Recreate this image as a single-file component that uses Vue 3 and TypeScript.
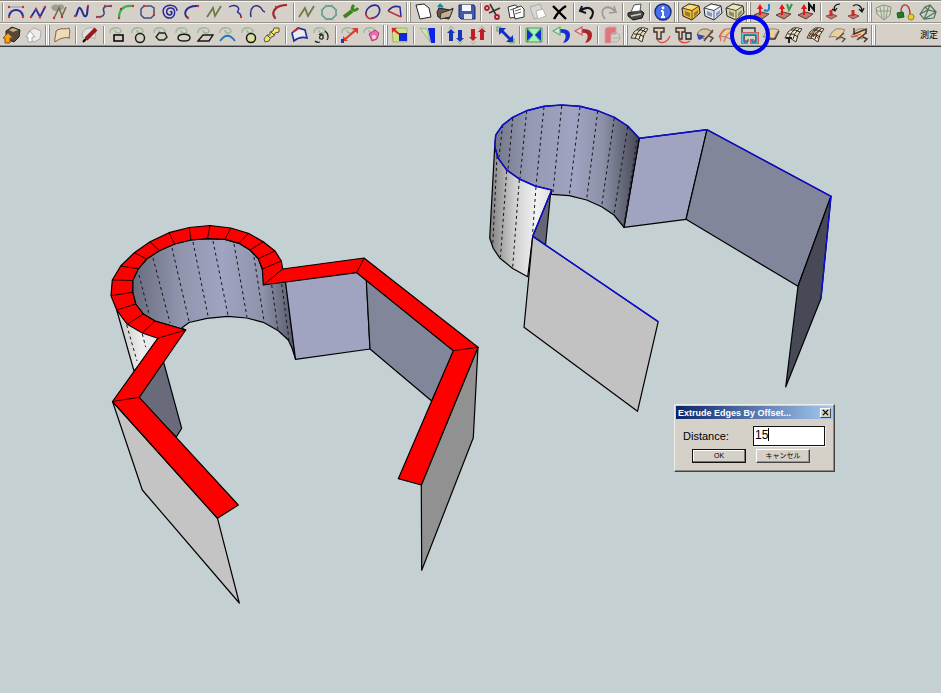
<script setup lang="ts">
import { ref } from 'vue'

type Part = { d: string; s?: string; f?: string; w?: number }
type Item = { kind: 'tool'; name: string; parts: Part[]; marked?: boolean } | { kind: 'sep' } | { kind: 'grip' }

const line = (d: string, s = '#000', w = 1): Part => ({ d, s, w })
const fill = (d: string, f: string, s = 'none', w = 1): Part => ({ d, f, s, w })
const dot = (x: number, y: number, r: number) => `M${x - r} ${y}a${r} ${r} 0 1 0 ${r * 2} 0a${r} ${r} 0 1 0 ${-r * 2} 0z`
const ends = (...p: number[][]): Part => fill(p.map(([x, y]) => dot(x, y, 1.2)).join(''), '#c8323c')
const tool = (name: string, ...parts: Part[]): Item => ({ kind: 'tool', name, parts })
const marked = (name: string, ...parts: Part[]): Item => ({ kind: 'tool', name, parts, marked: true })
const sep: Item = { kind: 'sep' }
const grip: Item = { kind: 'grip' }

const navy = '#2a2a96'
const crimson = '#b01c2c'
const olive = '#6c7a48'
const pale = '#a4b8a0'

const loop = line('M3 8C2 2 13 1 14 6C14 9 8 9 8 5', pale, 1.6)
const mesh = [
  fill('M2 13Q4 6 10 3Q15 2 19 4Q14 9 13 17Q8 12 2 13z', '#efe6c8', '#333'),
  line('M5 9Q11 8 15 12M8 5Q12 4 17 7M6 13Q8 7 13 3M10 14Q11 8 16 4', '#222'),
]
const leaf = fill('M2 12Q5 6 9 4Q14 3 18 5Q14 9 13 14Q8 10 2 12z', '#ecd09a', '#8a8378')
const pusher = (dark: string): Part[] => [
  fill('M2 13L9 10L17 12L10 17z', '#c4796c', '#55403c'),
  fill('M8 2L11 7H9V13H7V7H5z', dark),
]
const box = (top: string, side: string, edge: string, panel: string): Part[] => [
  fill('M2 6L9 2L19 4L20 11L12 18L3 14z', side, '#222'),
  fill('M2 6L9 2L19 4L12 8.500z', top, '#444'),
  fill('M5 9L10 11V15L5 13zM14 11L18 8V11L14 15z', panel),
  line('M12 8.500V18', edge),
]

const topRow: Item[] = [
  sep,
  tool('Classic Bezier', line('M4 14C6 6 16 6 18 14', navy, 2), line('M3 5H19', '#8d97a8'), ends([4, 15], [18, 15], [4, 5], [18, 5])),
  tool('Polyline', line('M4 15L9 7L13 15L18 5', navy, 1.8), ends([4, 15], [9, 7], [13, 15], [18, 5])),
  tool('Polyline divider', fill('M2 5Q5 1 9 3Q13 1 15 4Q15 9 10 8Q4 11 2 5z', '#a09c94'), line('M5 16L10 6L13 14L17 5', '#756c46', 1.6), ends([5, 16], [13, 15])),
  tool('Cubic Bezier', line('M4 14C6 15 7 4 9 6C12 8 12 16 15 14C17 12 16 8 17 4', navy, 2), ends([4, 14], [17, 4])),
  tool('Catmull spline', line('M4 15C10 15 12 13 11 10C9 5 12 4 18 4', '#33447c', 1.5), ends([4, 15], [7, 15], [18, 4], [12, 4])),
  tool('F-Spline', line('M4 16C4 8 8 3 18 4', '#2fb44e', 2.2), ends([4, 16], [6, 7], [18, 4])),
  tool('Rounded polygon', line('M7 4H14L17 6V13L14 16H7L4 13V7z', '#484887', 1.5), ends([7, 4], [17, 13])),
  tool('Spiral', line('M11 10C13 8 14 12 11 13C7 13 6 7 11 6C17 5 17 14 12 16C5 17 2 9 6 5C10 2 18 3 18 9', navy, 1.5)),
  tool('Arc', line('M7 16C1 12 5 3 17 4', navy, 2), ends([7, 16], [17, 4])),
  tool('Simple polyline', line('M4 15L10 6L12 14L18 4', olive, 1.8)),
  tool('Curve right', line('M4 5C11 1 15 6 13 9C11 11 15 10 16 14', navy, 1.4), ends([16, 15])),
  tool('Curve left', line('M4 15C2 5 8 2 13 5C16 7 14 9 18 10', '#34347e', 1.5)),
  tool('Red arc', line('M6 16C1 9 8 3 18 3', '#a32436', 2.2), ends([6, 16], [7, 5])),
  sep,
  tool('Edit polyline', line('M3 15L9 6L12 14L18 4', olive, 1.8)),
  tool('Polygon', line('M8 4H14L18 8V13L14 17H8L4 13V8z', '#4f9388', 1.4), fill([[8, 4], [14, 4], [18, 8], [4, 8], [4, 13], [18, 13], [8, 17], [14, 17]].map(([x, y]) => dot(x, y, 1.2)).join(''), '#69aaa0')),
  tool('Properties', line('M4 15L12 9', '#3e851d', 4), line('M18 6Q16 9 13 8Q11 6 14 3', '#3e851d', 3)),
  tool('Closed curve', line('M4 13C3 7 10 1 16 4C20 9 16 16 9 16', navy, 1.6), line('M4 11C4 17 9 18 14 15', '#bd3440', 1.8)),
  tool('Sector', line('M4 9C8 4 13 4 16 5L17 15', navy, 1.5), line('M4 9L17 15', '#bd3440', 1.8)),
  grip,
  tool('New', fill('M4 3L12 2L17 6L19 15L8 17z', '#fff', '#222')),
  tool('Open', fill('M3 10L5 6L16 8L19 6L15 17L4 15z', '#675546', '#222'), fill('M7 11L19 7L16 15L6 17z', '#c8ac8e', '#333'), line('M4 5L7 2M5 3L9 5', '#118299', 2)),
  tool('Save', fill('M3 3H18L19 5V17H5L3 15z', '#4459a8', '#182664'), fill('M6 3H15V9H6z', '#f7f7ff'), fill('M8 12H16V17H8z', '#dce1ea')),
  sep,
  tool('Cut', line('M7 2L13 13M17 6L6 11', '#3b3535', 1.6), line(dot(14, 15, 2), crimson, 1.8), line(dot(4, 6, 2), crimson, 1.8)),
  tool('Copy', fill('M3 5L10 3L13 5V15L5 16z', '#fff', '#333'), fill('M8 7L16 4L19 7V15L10 17z', '#fff', '#333'), line('M10 9L16 7M10 12L16 10M5 8L8 7', '#666')),
  tool('Paste', fill('M3 5L13 2L17 13L7 17z', '#d8d8d2', '#aaa'), fill('M9 9L16 7L19 14L11 17z', '#fff', '#b0b0b0')),
  tool('Delete', line('M4 4L17 17M17 4Q10 8 5 17', '#000', 2.4)),
  sep,
  tool('Undo', line('M14 17C21 9 14 2 4 9', '#151520', 2.2), line('M6 4L4 9L10 11', '#151520', 2)),
  tool('Redo', line('M7 17C0 8 8 1 17 9', '#989898', 1.8), line('M16 4L18 10L11 11', '#989898', 1.6)),
  sep,
  tool('Print', fill('M3 11L15 8L19 11L17 16L8 18L3 14z', '#494949', '#111'), fill('M6 10L9 3L16 2L15 9z', '#fff', '#555'), line('M6 14L16 12', '#c7d0bb', 1.6)),
  sep,
  tool('Model info', fill(dot(11, 10, 8), '#4a70e6', '#172a88', 1.4), line('M11 9V15M9 9H11M9 15H13', '#fff', 2), fill(dot(11, 6, 1.4), '#fff')),
  grip,
  tool('Solid box', ...box('#ffe06d', '#f2b92c', '#805807', '#8a7a4c')),
  tool('Shaded box', ...box('#fff', '#dfe7f4', '#55607e', '#8c98b4')),
  tool('Textured box', ...box('#ece7bc', '#d9d4a4', '#66643f', '#8e8c68')),
  grip,
  tool('Joint push pull', ...pusher('#e21717'), line('M17 2V7Q16 10 12 8', '#1889c7', 2)),
  tool('Vector push pull', ...pusher('#e21717'), line('M13 2L15 8L18 2', '#2f9b45', 2)),
  tool('Normal push pull', ...pusher('#e21717'), line('M13 9V2L18 8V2', '#111', 2)),
  sep,
  tool('Undo push pull', fill('M3 14L9 12L14 14L8 17z', '#c4796c', '#7c5148'), line('M8 14V8', '#cd2b1d', 3), line('M17 2C12 2 10 5 12 9M9 7L12 9L14 6', '#111', 1.2)),
  tool('Redo push pull', fill('M3 14L9 12L14 14L8 17z', '#c4796c', '#7c5148'), line('M8 14V8', '#cd2b1d', 3), line('M8 4C12 1 17 4 17 9M14 7L17 10L19 6', '#111', 1.2)),
  grip,
  tool('Subdivide', fill('M3 6L10 3L18 5L17 13L11 18L4 12z', '#dadcc8', '#83907d'), line('M7 5L9 16M11 4V17M15 5L13 16M4 9H17', '#8d9a8a')),
  tool('Follow path', line('M6 11C5 0 15 0 15 12', '#b23540', 1.4), fill('M2 11L8 10L9 15L3 16z', '#188322', '#1a5824'), fill(dot(16, 15, 3), '#e3cf25', '#93881c')),
  tool('Crystal', line('M3 12L8 5L13 3L19 10L17 16L7 17zM8 5L11 8L13 3M3 12L11 8L19 10M11 8L7 17M7 17L19 10', '#4d755d', 1.2)),
]

const bottomRow: Item[] = [
  tool('Import', fill('M5 6L11 2L19 5L18 12L13 17L5 14z', '#54483c', '#222'), fill('M8 5L12 3L17 5L12 7z', '#c3ae85'), fill('M7 8L12 13H9V18H4V13H2z', '#f5a21b', '#86510b')),
  tool('Export', fill('M5 7L11 3L18 6L17 14L11 17L6 14z', '#ececec', '#aaa'), fill('M7 6L12 12H9V17H5V12H3z', '#fff', '#a7a7a7')),
  grip,
  tool('Surface', fill('M5 6C10 2 15 5 18 3C20 8 17 12 19 13C14 12 9 13 4 17C3 14 5 11 5 6z', '#f0dbb5', '#755f42')),
  sep,
  tool('Draw on surface', fill('M3 10C4 5 8 2 14 3C18 7 16 11 16 14C12 11 8 12 5 15z', '#e2e2e2', '#a1ada3'), line('M7 14L17 4', '#981820', 4), line('M4 17L7 14', '#000', 2)),
  sep,
  tool('Surface rectangle', loop, line('M7 10H16V16H7z', '#000', 1.5)),
  tool('Surface circle', loop, line(dot(11, 13, 4.5), '#162019', 1.5)),
  tool('Surface polygon', loop, line('M5 12L8 8H14L16 12L13 15H8z', '#202b20', 1.4)),
  tool('Surface ellipse', loop, line('M5 13C5 8 17 8 17 13C17 17 5 17 5 13z', '#141914', 1.4)),
  tool('Surface parallelogram', loop, line('M3 16L8 10H18L14 16z', '#191919', 1.4)),
  tool('Surface arc', loop, line('M3 16C8 9 13 9 18 16', '#1a78bd', 1.8)),
  tool('Surface disc', loop, fill(dot(12, 13, 4.5), '#d8e29c', '#151515', 1.5)),
  tool('Surface offset', fill('M3 14L6 10L9 10L9 7L12 6L13 3L18 3L18 7L14 8L13 11L10 12L8 16L4 17z', '#f5e95b', '#555'), line('M6 10L9 13M10 7L13 10', '#444')),
  sep,
  tool('Surface freehand', fill('M3 8L9 3L16 5L18 13Q11 11 5 16z', '#ececee', '#1c2b9f', 1.6), line('M4 7L10 3', '#c5252e', 2)),
  tool('Text on surface', loop, line('M8 10C12 6 14 15 10 14C7 14 9 9 12 10V14M14 6Q19 10 16 15M4 16Q6 18 9 17', '#222', 1.2)),
  sep,
  tool('Scale edge', loop, line('M5 15L17 5', '#e3352c', 2), fill('M13 3H19V9zM4 11V16H9z', '#e3352c'), fill('M2 14H5V18H2z', '#2732bc')),
  tool('Eraser', loop, fill('M8 9L14 5L18 8L16 14L11 16z', '#ed6eac', '#ad3d7e'), fill(dot(13, 12, 2), '#ffd5e8')),
  grip,
  tool('Place component', fill('M3 3H18V17H4z', '#c9e48c', '#a7af63'), fill('M10 8H18V16H10z', '#1028d6'), line('M4 4L10 9', '#d8262b', 2), fill('M3 3H8L3 8z', '#d8262b')),
  sep,
  tool('Mirror', fill('M11 3H18V18H14z', '#0c22e8'), fill('M3 3L10 4L13 17z', '#cfe6b4', '#9db496')),
  sep,
  tool('Lift edges', fill('M6 4L10 8H8V16H4V8H2z', '#1634b8'), fill('M15 17L11 13H13V5H17V13H19z', '#1634b8'), line('M4 4L6 1L9 4M12 16L15 19L18 16', '#8eb38e')),
  tool('Drop edges', fill('M6 16L2 12H4V4H8V12H10z', '#c01e24'), fill('M15 3L19 7H17V15H13V7H11z', '#c01e24'), line('M4 16L6 19L9 16M12 4L15 1L18 4', '#a9b39e')),
  sep,
  tool('Diagonal link', line('M2 2H6V6H2zM15 14H19V18H15z', '#65a56d', 1.2), line('M7 6L15 14', '#1230c8', 3), fill('M4 3H11L4 10zM18 17H11L18 10z', '#1230c8')),
  sep,
  tool('Flip', fill('M3 3H19V17H3z', '#a4f0c0', '#61954f'), fill('M4 4L10 10L4 16zM18 4L12 10L18 16z', '#1230d8'), line('M4 3L10 10L4 17M18 3L12 10L18 17', '#2c9c4c')),
  sep,
  tool('Rotate blue', fill('M8 4Q20 3 19 11Q18 17 12 18Q16 12 14 9Q12 7 8 8z', '#1230d8'), fill('M9 2L2 6L9 10z', '#d4e8d4', '#5eb27a', 1.2)),
  tool('Rotate red', fill('M8 4Q20 3 19 11Q18 17 12 18Q16 12 14 9Q12 7 8 8z', '#b02028'), fill('M9 2L2 6L9 10z', '#e8d4d4', '#d05860', 1.2)),
  sep,
  tool('Bend', fill('M4 18V5Q4 2 8 2H15V9H10V18z', '#e4747c', '#c9a7a9'), line('M10 8Q19 6 19 13Q18 18 11 17M12 13H19', '#b6aaa9')),
  grip,
  tool('Edges to faces', ...mesh),
  tool('Extrude by rails', fill('M3 3H13V7H10V14H6V7H3z', '#e7ceb9', '#3b302b', 1.4), line('M6 14C9 20 16 18 19 11', '#e04a49', 1.3)),
  tool('Extrude by face', fill('M3 3H12V7H9V14H6V7H3z', '#e7ceb9', '#3b302b', 1.4), line('M6 15C9 19 14 18 17 16', '#e04a49', 1.3), line('M13 8H18V14H13z', '#222', 1.3)),
  tool('Extrude by lathe', fill('M2 10Q4 3 12 4L18 7L9 14z', '#dac79f', '#75685b'), fill('M2 9L10 11L5 15L3 14z', '#3449be'), line('M9 16L18 5M14 11L18 13L15 17', '#55483f', 1.4)),
  tool('Extrude by vector', leaf, line('M4 16L3 12Q5 6 9 4M7 17Q8 9 17 5M2 12Q5 6 8 4', '#de6b54', 1.3)),
  marked('Extrude edges by offset', line('M6 8H3V3H16V8H13', '#333', 1.4), line('M9 17H4V9H18V17H13V14', '#e94a3d', 4), line('M9 17H4V9H18V17H13V14', '#52c4dc', 2.4), line('M9 14V17H5V10H17V17H13V14', '#17596c', 1)),
  tool('Extrude by edges', leaf, line('M8 14L14 14L18 6', '#383838', 1.3)),
  tool('Mesh by object', ...mesh, fill('M3 12H9V14H7V18H5V14H3z', '#222')),
  tool('Mesh', ...mesh, line('M4 11Q8 5 13 3M8 12Q11 6 16 4M4 12Q10 8 14 14', '#6a3028')),
  tool('Trim surface', leaf, line('M9 15L17 8M14 12L18 14L15 17', '#55483f', 1.3)),
  tool('Split surface', leaf, line('M5 3V9L17 4V9M8 15L17 8M14 12L18 14L15 17', '#44332e', 1.5), line('M3 12L12 9', '#d94343', 1.3)),
  grip,
]
const rows = [
  { id: 'top', label: 'Drawing', items: topRow },
  { id: 'bottom', label: 'Surface and extrusion', items: bottomRow },
]

type Pt = [number, number]
const pts = (list: Pt[]) => list.map((p) => p.join(',')).join(' ')

/* Left model: flat band produced by the offset */
const ringOuter: Pt[] = [[282.7, 269], [281.3, 261], [275, 251], [263.3, 241.7], [248.3, 233.3], [230.7, 228], [210, 225.5], [189.3, 227.5], [169, 232.7], [150, 241.7], [134.3, 252.7], [120.7, 266], [112.3, 280], [111, 295.7], [116.7, 310], [127.3, 324.3], [142.3, 333], [157.7, 338.3]]
const ringInner: Pt[] = [[263.3, 285], [262.3, 269], [258.3, 258.6], [250, 250], [239, 243.3], [225, 239.3], [207.5, 238.6], [190.9, 240], [174.7, 244], [159.3, 250.7], [146.7, 259], [138.3, 268.8], [132.7, 280.5], [132.7, 292.3], [135.7, 304], [143.3, 314], [155, 321], [185.7, 330]]
const band: Pt[] = [
  [421.3, 485], [478, 347.3], [364, 258], ...ringOuter, [112.5, 401.5], [217.5, 518.3], [238.3, 505], [139.3, 397.3],
  ...[...ringInner].reverse(), [356.7, 272.7], [453.3, 350.7], [398.3, 478.7],
]
const joints: Pt[][] = [
  ...ringOuter.map((p, i): Pt[] => [p, ringInner[i]]),
  [[364, 258], [356.7, 272.7]], [[478, 347.3], [453.3, 350.7]], [[112.5, 401.5], [139.3, 397.3]],
]
const leftBottom: Pt[] = [[181.7, 328], [189, 322.5], [207, 318.3], [227.7, 316.4], [246.7, 318], [263.3, 322.3], [278.3, 330.7], [288.3, 340], [292, 348], [295.5, 359]]
const leftInside: Pt[] = [...ringInner.slice(1), ...leftBottom, [285.3, 278]]
const leftDashes: Pt[][] = [
  [[139, 275], [149, 314]], [[153, 258], [170, 323]], [[172, 248], [189, 321]], [[193, 242], [208, 316]], [[213, 241], [228, 315]],
  [[234, 244], [247, 317]], [[254, 257], [264, 321]], [[271.7, 285], [278, 330]], [[281.7, 284], [289, 340]],
  [[126.7, 325], [137, 361]], [[142.3, 334], [145.7, 347]],
]

/* Right model: the edges before the offset */
const rimFront: Pt[] = [[494.7, 146.7], [498, 158], [506.7, 170], [519.3, 179], [535, 186], [551.7, 190]]
const rimBack: Pt[] = [[494.7, 146.7], [495.7, 135], [502.7, 125], [512.7, 117.3], [526.7, 110.7], [544, 106.3], [561.7, 105], [580, 106.3], [597.7, 110.7], [614.3, 117.3], [627.7, 126], [639.3, 138.3]]
const rightBottom: Pt[] = [[624, 227.3], [614, 215], [601.7, 206.7], [586.7, 200], [569.3, 195.7], [551.3, 194.3]]
const outerBottom: Pt[] = [[527.7, 276.7], [512.7, 268.5], [500, 258.3], [493.3, 248.5], [489.7, 238]]
const rightInside: Pt[] = [...rimBack, ...rightBottom, ...[...rimFront].reverse()]
const rightOutside: Pt[] = [...rimFront, [532.7, 236.3], ...outerBottom]
const rightDashes: Pt[][] = [
  [[502.7, 125], [499, 157]], [[512.7, 118], [508, 170]], [[526.7, 111], [520, 178]], [[544, 107], [536, 186]], [[561.7, 106], [553, 192]],
  [[580, 107], [569.3, 195]], [[597.7, 111], [586.7, 199]], [[614.3, 118], [601.7, 206]], [[627.7, 127], [614, 214]], [[637, 140], [624, 225]],
  [[497, 156], [492.7, 246]], [[506.7, 171], [500.5, 257]], [[519.3, 180], [512.7, 267]], [[536, 187], [532.7, 232]],
]

const distance = ref('15')
const open = ref(true)
</script>

<template>
  <main class="app">
    <header class="toolbars">
      <div v-for="row in rows" :key="row.id" class="bar" :class="row.id" role="toolbar" :aria-label="row.label">
        <template v-for="(item, i) in row.items" :key="i">
          <span v-if="item.kind === 'sep'" class="sep"></span>
          <span v-else-if="item.kind === 'grip'" class="grip"></span>
          <button v-else type="button" class="tool" :class="{ marked: item.marked }" :aria-label="item.name">
            <svg viewBox="0 0 22 20" aria-hidden="true">
              <path v-for="(p, k) in item.parts" :key="k" :d="p.d" :fill="p.f ?? 'none'" :stroke="p.s" :stroke-width="p.w" />
            </svg>
          </button>
        </template>
        <span v-if="row.id === 'bottom'" class="measure">測定</span>
      </div>
    </header>

    <section class="viewport">
      <svg class="scene" viewBox="0 47 941 646" preserveAspectRatio="xMinYMin meet" role="img" aria-label="Model view">
        <defs>
          <linearGradient id="in-left"><stop offset="0" stop-color="#696c7d" /><stop offset=".3" stop-color="#9195ae" /><stop offset=".55" stop-color="#a0a4c1" /><stop offset=".8" stop-color="#8e92ab" /><stop offset="1" stop-color="#555766" /></linearGradient>
          <linearGradient id="in-right"><stop offset="0" stop-color="#747789" /><stop offset=".25" stop-color="#9599b3" /><stop offset=".55" stop-color="#a0a4c1" /><stop offset=".75" stop-color="#8c90a8" /><stop offset="1" stop-color="#454753" /></linearGradient>
          <linearGradient id="out"><stop offset="0" stop-color="#808080" /><stop offset=".4" stop-color="#cfcfcf" /><stop offset=".75" stop-color="#f2f2f2" /><stop offset="1" stop-color="#ddd" /></linearGradient>
          <linearGradient id="out-left"><stop offset="0" stop-color="#c4c4c4" /><stop offset=".5" stop-color="#ececec" /><stop offset="1" stop-color="#e4e4e4" /></linearGradient>
        </defs>

        <g class="faces">
          <polygon points="116.7,310 134,371 165,340 142,325" fill="url(#out-left)" />
          <polygon :points="pts(leftInside)" fill="url(#in-left)" />
          <polygon points="285,278 366,270 370,349 295.5,359.3" fill="#a0a4c0" />
          <polygon points="366,275 455,350 431.7,401 370,349" fill="#82869a" />
          <polygon points="478,347.3 473.3,437.7 421.7,570.3 421.3,485" fill="#919191" />
          <polygon points="163,360 181.7,428.3 176.3,437 135,397" fill="#696b7b" />
          <polygon points="112.5,401.5 142.3,490 239.3,603 217.5,518.3" fill="#c4c4c4" />
          <polyline v-for="(d, i) in leftDashes" :key="i" :points="pts(d)" class="dash" />
          <polygon :points="pts(band)" fill="#f00" />
          <polyline v-for="(j, i) in joints" :key="'j' + i" :points="pts(j)" class="thin" />
        </g>

        <g class="faces">
          <polygon points="639.3,138.3 707,129.7 686,219.3 624,227.3" fill="#a0a4c0" />
          <polygon points="707,129.7 831,196.3 798,286.3 686,219.3" fill="#82869a" />
          <polygon points="831,196.3 821,298.5 785.7,387 798,286.3" fill="#474956" />
          <polygon :points="pts(rightInside)" fill="url(#in-right)" />
          <polygon points="551.3,190 550.5,194 545.5,245 532.7,236.3" fill="#646676" />
          <polygon :points="pts(rightOutside)" fill="url(#out)" />
          <polygon points="532.7,236.3 658.2,321.7 637.5,411.3 524,327.3" fill="#c2c2c2" />
          <polyline v-for="(d, i) in rightDashes" :key="i" :points="pts(d)" class="dash" />
        </g>

        <g class="selected">
          <polyline :points="pts(rimBack)" />
          <polyline :points="pts(rimFront)" />
          <polyline points="639.3,138.3 707,129.7 831,196.3 821,298.5" />
          <polyline points="551.7,190 532.7,236.3 658.2,321.7" />
        </g>
      </svg>

      <form v-if="open" class="dialog" aria-label="Extrude Edges By Offset" @submit.prevent="open = false">
        <div class="title">
          <span>Extrude Edges By Offset...</span>
          <button type="button" class="close" aria-label="Close" @click="open = false">
            <svg viewBox="0 0 8 8" aria-hidden="true"><path d="M1 1L7 7M7 1L1 7" stroke="#000" stroke-width="1.5" /></svg>
          </button>
        </div>
        <div class="field">
          <label for="distance">Distance:</label>
          <span class="entry"><input id="distance" v-model="distance" type="text" :style="{ width: distance.length + 'ch' }" /><i class="caret"></i></span>
        </div>
        <div class="actions">
          <button type="submit" class="default">OK</button>
          <button type="button" @click="open = false">キャンセル</button>
        </div>
      </form>
    </section>
  </main>
</template>

<style>
body {
  margin: 0;
  background: #c4d0d1;
}
</style>

<style scoped>
.app {
  display: flex;
  flex-direction: column;
  min-height: 100vh;
  overflow: hidden;
  font-family: "Liberation Sans", "Noto Sans CJK JP", sans-serif;
  color: #000;
}
.toolbars {
  background: #d5d1c9;
  border-top: 1px solid #8b8983;
  border-bottom: 1px solid #33383a;
}
.bar {
  display: flex;
  align-items: center;
  box-sizing: border-box;
  border-top: 1px solid #f5f4f0;
  border-bottom: 1px solid #96938d;
}
.top {
  height: 22px;
}
.bottom {
  height: 23px;
  padding-left: 1px;
}
.tool {
  position: relative;
  flex: none;
  width: 22px;
  height: 20px;
  padding: 0;
  border: 0;
  background: none;
}
.tool svg {
  display: block;
  width: 22px;
  height: 20px;
}
.marked::after {
  content: "";
  position: absolute;
  z-index: 2;
  inset: -10px -9px;
  border: 4px solid #0000f4;
  border-radius: 50%;
}
.sep {
  flex: none;
  width: 5px;
  height: 18px;
  background: linear-gradient(90deg, transparent 2px, #8d8a84 2px, #8d8a84 3px, #fff 3px, #fff 4px, transparent 4px);
}
.bottom .sep {
  width: 6px;
}
.grip {
  flex: none;
  width: 6px;
  height: 20px;
  background: linear-gradient(90deg, #8d8a84 1px, #fff 1px, #fff 2px, transparent 2px, transparent 3px, #fff 3px, #fff 4px, #8d8a84 4px, #8d8a84 5px, transparent 5px);
}
.measure {
  margin-left: auto;
  padding-right: 3px;
  font-size: 9px;
  line-height: 20px;
}
.viewport {
  position: relative;
  flex: 1;
  background: #c4d0d1;
}
.scene {
  display: block;
  width: 100%;
}
.faces polygon {
  stroke: #000;
  stroke-width: 1.2;
  stroke-linejoin: round;
}
.thin {
  stroke: #200;
  stroke-width: 1;
  fill: none;
}
.dash {
  stroke: #15151c;
  stroke-width: 1;
  stroke-dasharray: 3 3;
  fill: none;
}
.selected polyline {
  stroke: #0c0cdc;
  stroke-width: 1.4;
  stroke-linejoin: round;
  fill: none;
}
.dialog {
  position: absolute;
  left: 674px;
  top: 357px;
  width: 161px;
  box-sizing: border-box;
  padding: 1px 1px 8px;
  background: #d5d1c9;
  border: 1px solid;
  border-color: #efede8 #45433f #45433f #efede8;
  box-shadow: inset -1px -1px #8b8882;
}
.title {
  display: flex;
  align-items: center;
  justify-content: space-between;
  height: 13px;
  padding: 0 2px;
  background: linear-gradient(90deg, #0a246a, #a6caf0);
  color: #fff;
  font-size: 9px;
  font-weight: bold;
  white-space: nowrap;
}
.close {
  display: flex;
  align-items: center;
  justify-content: center;
  width: 11px;
  height: 10px;
  padding: 0;
  background: #d5d1c9;
  border: 1px solid;
  border-color: #fff #444 #444 #fff;
}
.close svg {
  flex: none;
  width: 7px;
  height: 7px;
}
.field {
  display: flex;
  align-items: center;
  justify-content: space-between;
  padding: 7px 8px 0 7px;
  font-size: 11px;
}
.entry {
  display: flex;
  align-items: center;
  width: 72px;
  height: 20px;
  box-sizing: border-box;
  padding: 0 1px 3px;
  background: #fff;
  border: 1px solid #111;
  box-shadow: 1px 1px #f4f2ee;
}
.entry input {
  min-width: 0;
  padding: 0;
  border: 0;
  outline: 0;
  background: none;
  font: 12px/14px "Liberation Sans", sans-serif;
}
.caret {
  width: 1px;
  height: 13px;
  background: #000;
}
.actions {
  display: flex;
  gap: 10px;
  padding: 3px 16px 0;
}
.actions button {
  width: 54px;
  height: 14px;
  padding: 0;
  background: #d5d1c9;
  border: 1px solid;
  border-color: #fff #444 #444 #fff;
  box-shadow: inset -1px -1px #96938d;
  font: 7px/10px "Liberation Sans", "Noto Sans CJK JP", sans-serif;
  white-space: nowrap;
}
.actions .default {
  border-color: #111;
  box-shadow: inset -1px -1px #77746f, inset 1px 1px #fff;
}
</style>
